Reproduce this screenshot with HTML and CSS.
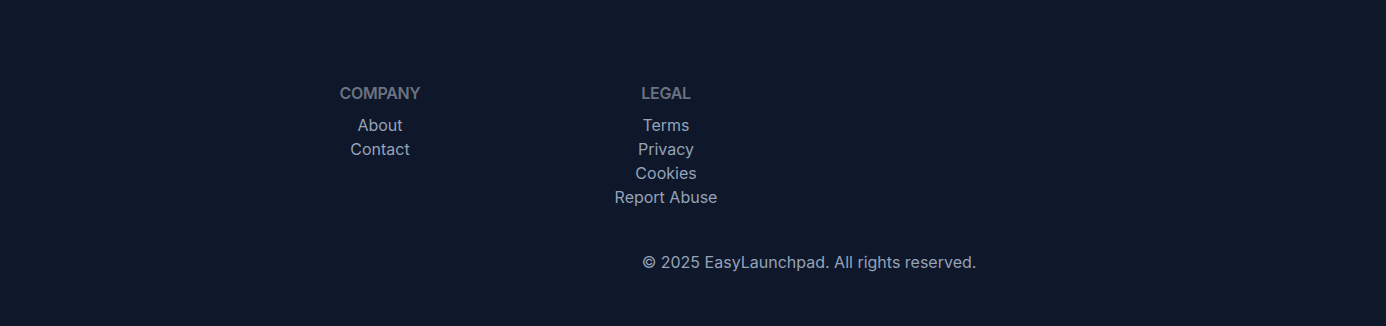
FILE: index.html
```html
<!DOCTYPE html>
<html lang="en">

<head>
    <meta charset="UTF-8">
    <meta name="viewport" content="width=device-width, initial-scale=1.0">
    <title>EasyLaunchpad</title>
    <link rel="stylesheet" href="styles.css">
</head>

<body>

    <div class="page">
        <aside class="sidebar"></aside>

        <footer class="footer">
            <div class="footer-grid">
                <div class="footer-col">
                    <h3>Company</h3>
                    <ul>
                        <li><a href="#">About</a></li>
                        <li><a href="#">Contact</a></li>
                    </ul>
                </div>
                <div class="footer-col">
                    <h3>Legal</h3>
                    <ul>
                        <li><a href="#">Terms</a></li>
                        <li><a href="#">Privacy</a></li>
                        <li><a href="#">Cookies</a></li>
                        <li><a href="#">Report Abuse</a></li>
                    </ul>
                </div>
                <div class="footer-col"></div>
                <div class="footer-col"></div>
            </div>
            <p class="copyright">&copy; 2025 EasyLaunchpad. All rights reserved.</p>
        </footer>
    </div>

</body>

</html>
```

FILE: styles.css
```css
body {
    font-family: 'Inter', 'Liberation Sans', sans-serif;
    background-color: #0f172a;
    color: #94a3b8;
    margin: 0;
}

.page {
    display: flex;
    min-height: 326px;
}

.sidebar {
    width: 232px;
    flex-shrink: 0;
}

.footer {
    flex: 1;
    padding: 81px 16px 52px;
}

.footer-grid {
    display: grid;
    grid-template-columns: repeat(4, 1fr);
    gap: 22px;
    text-align: center;
}

.footer-col h3 {
    margin: 0 0 8px;
    font-size: 16px;
    line-height: 24px;
    font-weight: 600;
    letter-spacing: -0.3px;
    text-transform: uppercase;
    color: #6b7280;
}

.footer-col ul {
    list-style: none;
    margin: 0;
    padding: 0;
}

.footer-col li {
    font-size: 16px;
    line-height: 24px;
}

.footer-col a {
    color: #94a3b8;
    text-decoration: none;
}

.footer-col a:hover {
    color: #ffffff;
}

.copyright {
    margin: 41px 0 0;
    text-align: center;
    font-size: 16px;
    line-height: 24px;
    color: #94a3b8;
}
```
